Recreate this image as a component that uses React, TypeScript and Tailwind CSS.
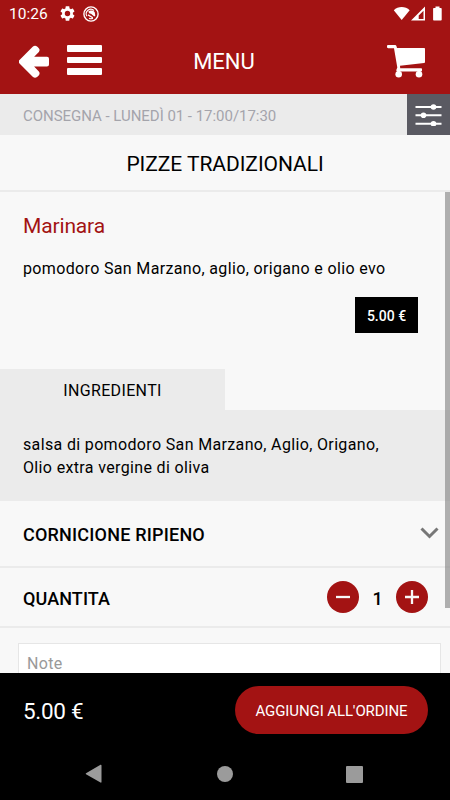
import { useState } from 'react'

function StatusBar() {
  return (
    <div className="flex h-[27px] items-center pl-[9px] text-white">
      <span className="w-[51px] pt-px text-[15.5px] leading-[27px]">10:26</span>
      <svg className="h-[15px] w-[15px]" viewBox="2 2 20 20" fill="currentColor">
        <path fillRule="evenodd" d="M19.14 12.94c.04-.3.06-.61.06-.94 0-.32-.02-.64-.07-.94l2.03-1.58c.18-.14.23-.41.12-.61l-1.92-3.32c-.12-.22-.37-.29-.59-.22l-2.39.96c-.5-.38-1.03-.7-1.62-.94l-.36-2.54c-.04-.24-.24-.41-.48-.41h-3.84c-.24 0-.43.17-.47.41l-.36 2.54c-.59.24-1.13.57-1.62.94l-2.39-.96c-.22-.08-.47 0-.59.22L2.74 8.87c-.12.21-.08.47.12.61l2.03 1.58c-.05.3-.09.63-.09.94s.02.64.07.94l-2.03 1.58c-.18.14-.23.41-.12.61l1.92 3.32c.12.22.37.29.59.22l2.39-.96c.5.38 1.03.7 1.62.94l.36 2.54c.05.24.24.41.48.41h3.84c.24 0 .44-.17.47-.41l.36-2.54c.59-.24 1.13-.56 1.62-.94l2.39.96c.22.08.47 0 .59-.22l1.92-3.32c.12-.22.07-.47-.12-.61l-2.01-1.58zM12 15.6A3.6 3.6 0 1 1 12 8.4a3.6 3.6 0 0 1 0 7.2z" />
      </svg>
      <svg className="ml-[8px] h-[16px] w-[16px]" viewBox="0 0 16 16" fill="none" stroke="currentColor">
        <circle cx="8" cy="8" r="7.1" strokeWidth="1.4" />
        <path d="M3.9 10.200A4.600 4.600 0 0 1 11 4.500M6 12.200A4.600 4.600 0 0 0 10 12.200" strokeWidth="1.100" />
        <path d="M5.200 5.800C7 4 10.500 4 11.800 6.500L12.300 9.800 11.300 10.600 8 7.800 6.500 7.600z" fill="currentColor" stroke="none" />
        <path d="M5 8.900l4.800 2.900" strokeWidth="1.300" />
      </svg>
      <svg className="ml-auto mr-[8px] h-[16px] w-[49px]" viewBox="0 0 49 16" fill="currentColor">
        <path d="M0.8 4.2C5-.2 12.4-.2 16.7 4.2L8.7 14z" />
        <path fillRule="evenodd" d="M32 .5V14.500H18zM30.500 4.800L25.700 9.600V12.900h4.800z" />
        <path d="M42.5.6h4v1.3h1.2c.6 0 1 .4 1 1V13.600c0 .6-.4 1-1 1h-6.6c-.6 0-1-.4-1-1V2.900c0-.6.4-1 1-1h1.400z" />
      </svg>
    </div>
  )
}

function Header() {
  return (
    <header className="h-[94px] bg-[#a31313]">
      <StatusBar />
      <div className="grid h-[67px] grid-cols-[1fr_auto_1fr] items-center pt-[2px] text-white">
        <div className="flex items-center pl-[19px]">
          <button aria-label="Indietro">
            <svg className="block h-[33px] w-[30px]" viewBox="0 0 30 33" fill="currentColor" stroke="currentColor" strokeWidth="2" strokeLinejoin="round">
              <path d="M1.200 15.700L14.400 2.500Q16 1 17.700 2.500L18.900 3.700Q20.200 5 18.900 6.500L12.700 12.800H28Q29 12.800 29 13.800V19.400Q29 20.400 28 20.400H12.700L18.900 27Q20.200 28.500 18.900 29.900L17.700 31Q16 32.300 14.400 31L1.200 17.800Q.3 16.800 1.200 15.700z" />
            </svg>
          </button>
          <button aria-label="Apri menu" className="-mt-[3px] ml-[18px] flex flex-col gap-[5px]">
            <span className="h-[7px] w-[35px] rounded-[1px] bg-white" />
            <span className="h-[6px] w-[35px] rounded-[1px] bg-white" />
            <span className="h-[7px] w-[35px] rounded-[1px] bg-white" />
          </button>
        </div>
        <h1 className="mr-[2px] text-[22px]">MENU</h1>
        <button aria-label="Carrello" className="mr-[25px] justify-self-end">
          <svg className="block h-[33px] w-[38px]" viewBox="0 0 38 33" fill="currentColor">
            <path d="M1.200 0H8c.8 0 1.300.4 1.500 1.200L10 3H37c.6 0 1 .4 1 1V17c0 .6-.3.900-.9 1L13 20.700l.2 2.600H34.200c.5 0 .8.300.8.800v1.500c0 .5-.3.800-.8.800H10.500c-.8 0-1.300-.6-1.200-1.400l1-2.500L7 3.300H1.200C.5 3.300 0 2.800 0 2.100v-.9C0 .5.500 0 1.200 0z" />
            <circle cx="11.700" cy="29.300" r="3.300" />
            <circle cx="32" cy="29.300" r="3.300" />
            <path d="M10.300 25h2.800v3h-2.800zM30.600 25h2.800v3h-2.800z" />
          </svg>
        </button>
      </div>
    </header>
  )
}

function DeliveryBar() {
  return (
    <div className="flex h-[41px] items-center justify-between bg-[#ebebeb]">
      <span className="pl-[23px] pt-[4px] text-[15px] tracking-[-0.03px] text-[#a4a4ab]">CONSEGNA - LUNEDÌ 01 - 17:00/17:30</span>
      <button aria-label="Filtri" className="flex h-[41px] w-[43px] items-center justify-center bg-[#5a5a62]">
        <svg className="h-[22px] w-[27px]" viewBox="0 0 27 22" fill="white" stroke="white" strokeWidth="2">
          <path d="M.5 3h26M.5 11.300h26M.5 19.700h26" />
          <circle cx="18.500" cy="3" r="1.800" />
          <circle cx="8.500" cy="11.300" r="1.800" />
          <circle cx="18.500" cy="19.700" r="1.800" />
        </svg>
      </button>
    </div>
  )
}

function RoundButton({ label, path, onClick }: { label: string; path: string; onClick: () => void }) {
  return (
    <button aria-label={label} onClick={onClick} className="flex h-8 w-8 items-center justify-center rounded-full bg-[#a31313]">
      <svg className="h-[14px] w-[14px]" viewBox="0 0 14 14" fill="none" stroke="#f8f8f8" strokeWidth="2.300">
        <path d={path} />
      </svg>
    </button>
  )
}

function NavBar() {
  return (
    <nav className="flex h-[52px] items-center justify-between bg-black pl-[85px] pr-[87px]">
      <svg className="h-[20px] w-[18px]" viewBox="0 0 18 20" fill="#9b9b9b"><path d="M1 9.300L15.500.8c.5-.3 1 0 1 .6v16.600c0 .6-.5.900-1 .6L1 10.300c-.4-.3-.4-.7 0-1z" /></svg>
      <span className="h-4 w-4 rounded-full bg-[#9b9b9b]" />
      <span className="h-[17px] w-[17px] rounded-[1px] bg-[#9b9b9b]" />
    </nav>
  )
}

export default function App() {
  const [qty, setQty] = useState(1)

  return (
    <div className="flex h-[800px] w-[450px] flex-col overflow-hidden bg-[#f8f8f8] font-[Roboto,sans-serif] text-black">
      <Header />
      <DeliveryBar />
      <h2 className="flex h-[57px] items-center justify-center border-b-2 border-[#ebebeb] pt-[4px] text-[21px] tracking-[-0.05px]">PIZZE TRADIZIONALI</h2>

      <main className="relative h-[481px] overflow-hidden">
        <section className="h-[177px] px-[23px]">
          <h3 className="pt-[20px] text-[21px] leading-[28px] tracking-[-0.15px] text-[#a31313]">Marinara</h3>
          <p className="pt-[18px] text-[16px] leading-[22px] tracking-[0.35px]">pomodoro San Marzano, aglio, origano e olio evo</p>
          <div className="mt-[17px] flex justify-end pr-[9px]">
            <span className="flex h-[36px] w-[63px] items-center justify-center bg-black pt-[3px] text-[14px] font-medium text-white">5.00 €</span>
          </div>
        </section>

        <div className="h-[41px] w-1/2 bg-[#ebebeb] text-center text-[16px] leading-[43px] tracking-[0.35px]">INGREDIENTI</div>
        <p className="h-[91px] bg-[#ebebeb] pl-[23px] pt-[23px] text-[16px] leading-[23px] tracking-[0.35px]">
          salsa di pomodoro San Marzano, Aglio, Origano,<br />Olio extra vergine di oliva
        </p>

        <div className="flex h-[67px] items-center justify-between border-b-2 border-[#ebebeb] pl-[23px] pr-[11px]">
          <span className="pt-[2px] text-[18px] font-medium tracking-[0.2px]">CORNICIONE RIPIENO</span>
          <svg className="mb-[2px] h-[12px] w-[19px]" viewBox="0 0 19 12" fill="none" stroke="#777" strokeWidth="3"><path d="M1.500 1.500l8 8 8-8" /></svg>
        </div>

        <div className="flex h-[60px] items-center border-b-2 border-[#ebebeb] pl-[23px] pr-[22px]">
          <span className="mr-auto pt-[2px] text-[18px] font-medium tracking-[0.1px]">QUANTITA</span>
          <RoundButton label="Meno" path="M0 7h14" onClick={() => setQty(Math.max(1, qty - 1))} />
          <span className="w-[37px] pt-[2px] text-center text-[18px] font-medium">{qty}</span>
          <RoundButton label="Più" path="M0 7h14M7 0v14" onClick={() => setQty(qty + 1)} />
        </div>

        <div className="pl-[18px] pr-[9px] pt-[15px]">
          <textarea placeholder="Note" className="block h-20 w-full resize-none border border-[#e6e6e6] bg-white px-[8px] pt-[8px] text-[16px] tracking-[0.3px] placeholder:text-[#999]" />
        </div>

        {/* scroll indicator */}
        <div className="absolute right-0 top-0 h-[416px] w-[5px] bg-[#7f7f7f]/60" />
      </main>

      <footer className="flex h-[75px] items-center justify-between bg-black pl-[23px] pr-[22px] text-white">
        <span className="pt-[3px] text-[22.5px] tracking-[-0.3px]">5.00 €</span>
        <button className="mb-px h-[48px] w-[193px] rounded-full bg-[#a31313] pt-[2px] text-[15px] tracking-[-0.1px]">AGGIUNGI ALL'ORDINE</button>
      </footer>
      <NavBar />
    </div>
  )
}
